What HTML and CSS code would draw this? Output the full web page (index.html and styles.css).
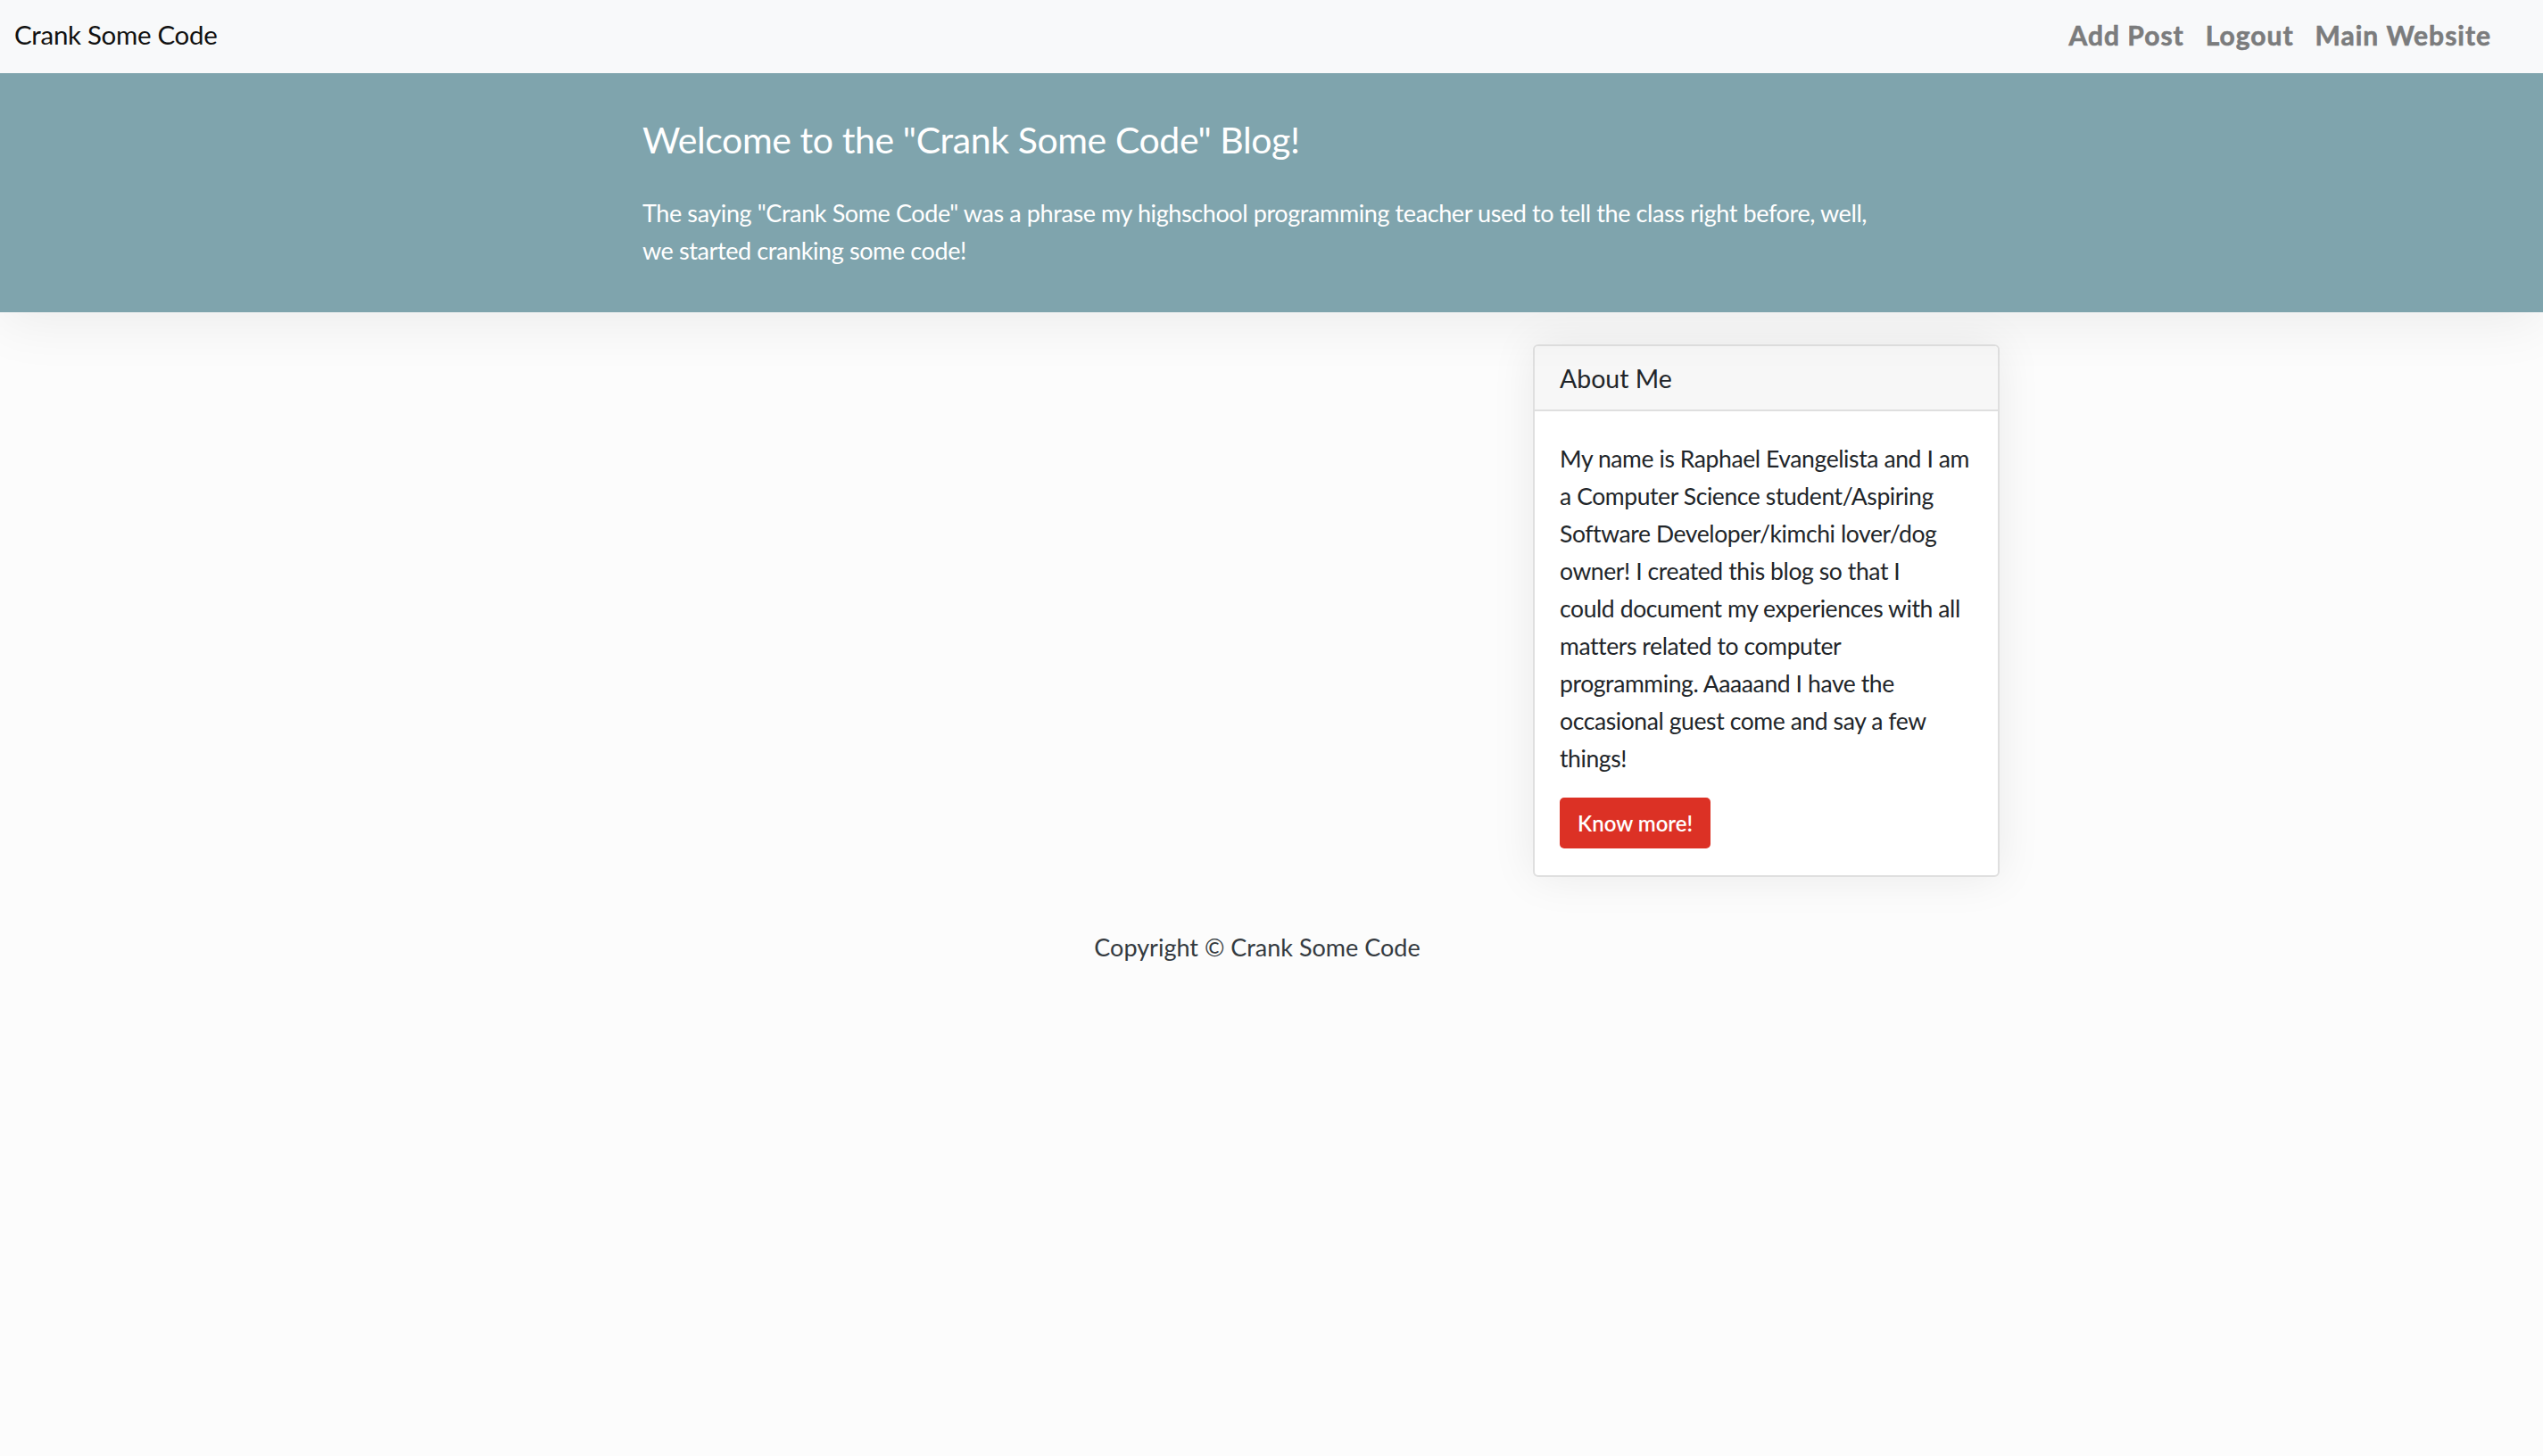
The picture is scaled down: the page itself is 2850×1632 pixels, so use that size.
FILE: index.html
```html
<!DOCTYPE html>
<html lang="en">
<head>
<meta charset="utf-8">
<title>Crank Some Code</title>
<link rel="stylesheet" href="styles.css">
</head>
<body>
<nav class="navbar">
  <a class="brand" href="#">Crank Some Code</a>
  <ul class="nav-links">
    <li><a href="#">Add Post</a></li>
    <li><a href="#">Logout</a></li>
    <li><a href="#">Main Website</a></li>
  </ul>
</nav>
<header class="hero">
  <div class="hero-inner">
    <h1 class="hero-title">Welcome to the "Crank Some Code" Blog!</h1>
    <p class="hero-text">The saying "Crank Some Code" was a phrase my highschool programming teacher used to tell the class right before, well, we started cranking some code!</p>
  </div>
</header>
<main class="main">
  <section class="posts"></section>
  <aside class="sidebar">
    <div class="card">
      <div class="card-header">About Me</div>
      <div class="card-body">
        <p class="card-text">My name is Raphael Evangelista and I am<br>a Computer Science student/Aspiring<br>Software Developer/kimchi lover/dog<br>owner! I created this blog so that I<br>could document my experiences with all<br>matters related to computer<br>programming. Aaaaand I have the<br>occasional guest come and say a few<br>things!</p>
        <a class="btn" href="#">Know more!</a>
      </div>
    </div>
  </aside>
</main>
<footer class="footer">Copyright © Crank Some Code</footer>
</body>
</html>
```
FILE: styles.css
```css
* { box-sizing: border-box; }
html, body { margin: 0; padding: 0; }
body {
  background: #fcfcfc;
  font-family: "Lato", "Open Sans", sans-serif;
  color: #212529;
  font-size: 28px;
  line-height: 42px;
}
a { text-decoration: none; }

.navbar {
  height: 82px;
  background: #f8f9fa;
  display: flex;
  align-items: center;
  justify-content: space-between;
  padding: 0 58px 4px 16px;
  position: relative;
  z-index: 2;
}
.brand {
  color: #111;
  font-size: 29.5px;
  letter-spacing: -0.3px;
}
.nav-links {
  list-style: none;
  margin: 0;
  padding: 0;
  display: flex;
  gap: 24px;
}
.nav-links a {
  color: #7b7c7d;
  font-weight: 700;
  font-size: 30px;
  letter-spacing: 1px;
  -webkit-text-stroke: 0.6px #7b7c7d;
}

.hero {
  background: #7fa4ad;
  color: #fff;
  padding: 50px 0 48px;
  box-shadow: 0 10px 60px rgba(0, 0, 0, 0.07);
  position: relative;
  z-index: 1;
}
.hero-inner {
  width: 1410px;
  margin: 0 auto;
}
.hero-title {
  margin: 0 0 37px;
  font-weight: 400;
  font-size: 41px;
  line-height: 1.2;
  letter-spacing: -0.4px;
}
.hero-text {
  margin: 0;
  font-size: 27px;
  line-height: 42px;
  letter-spacing: -0.4px;
}

.main {
  width: 1632px;
  margin: 36px auto 0;
  display: grid;
  grid-template-columns: 1fr 523px;
}
.card {
  background: #fff;
  border: 2px solid #dfdfdf;
  border-radius: 6px;
  box-shadow: 0 0 50px rgba(0, 0, 0, 0.08);
  overflow: hidden;
}
.card-header {
  height: 73px;
  background: #f7f7f7;
  border-bottom: 2px solid #dfdfdf;
  padding: 0 28px;
  display: flex;
  align-items: center;
  font-size: 28.5px;
}
.card-body {
  padding: 32px 14px 30px 28px;
}
.card-text {
  margin: 0 0 23px;
  font-size: 26.5px;
  line-height: 42px;
  letter-spacing: -0.4px;
  white-space: nowrap;
}
.btn {
  display: inline-flex;
  align-items: center;
  height: 57px;
  padding: 0 20px;
  background: #dc3125;
  color: #fff;
  border-radius: 5px;
  font-size: 24px;
  font-weight: 600;
}

.footer {
  text-align: center;
  margin-top: 58px;
  padding-right: 32px;
  color: #343a40;
  font-size: 27px;
}
```
